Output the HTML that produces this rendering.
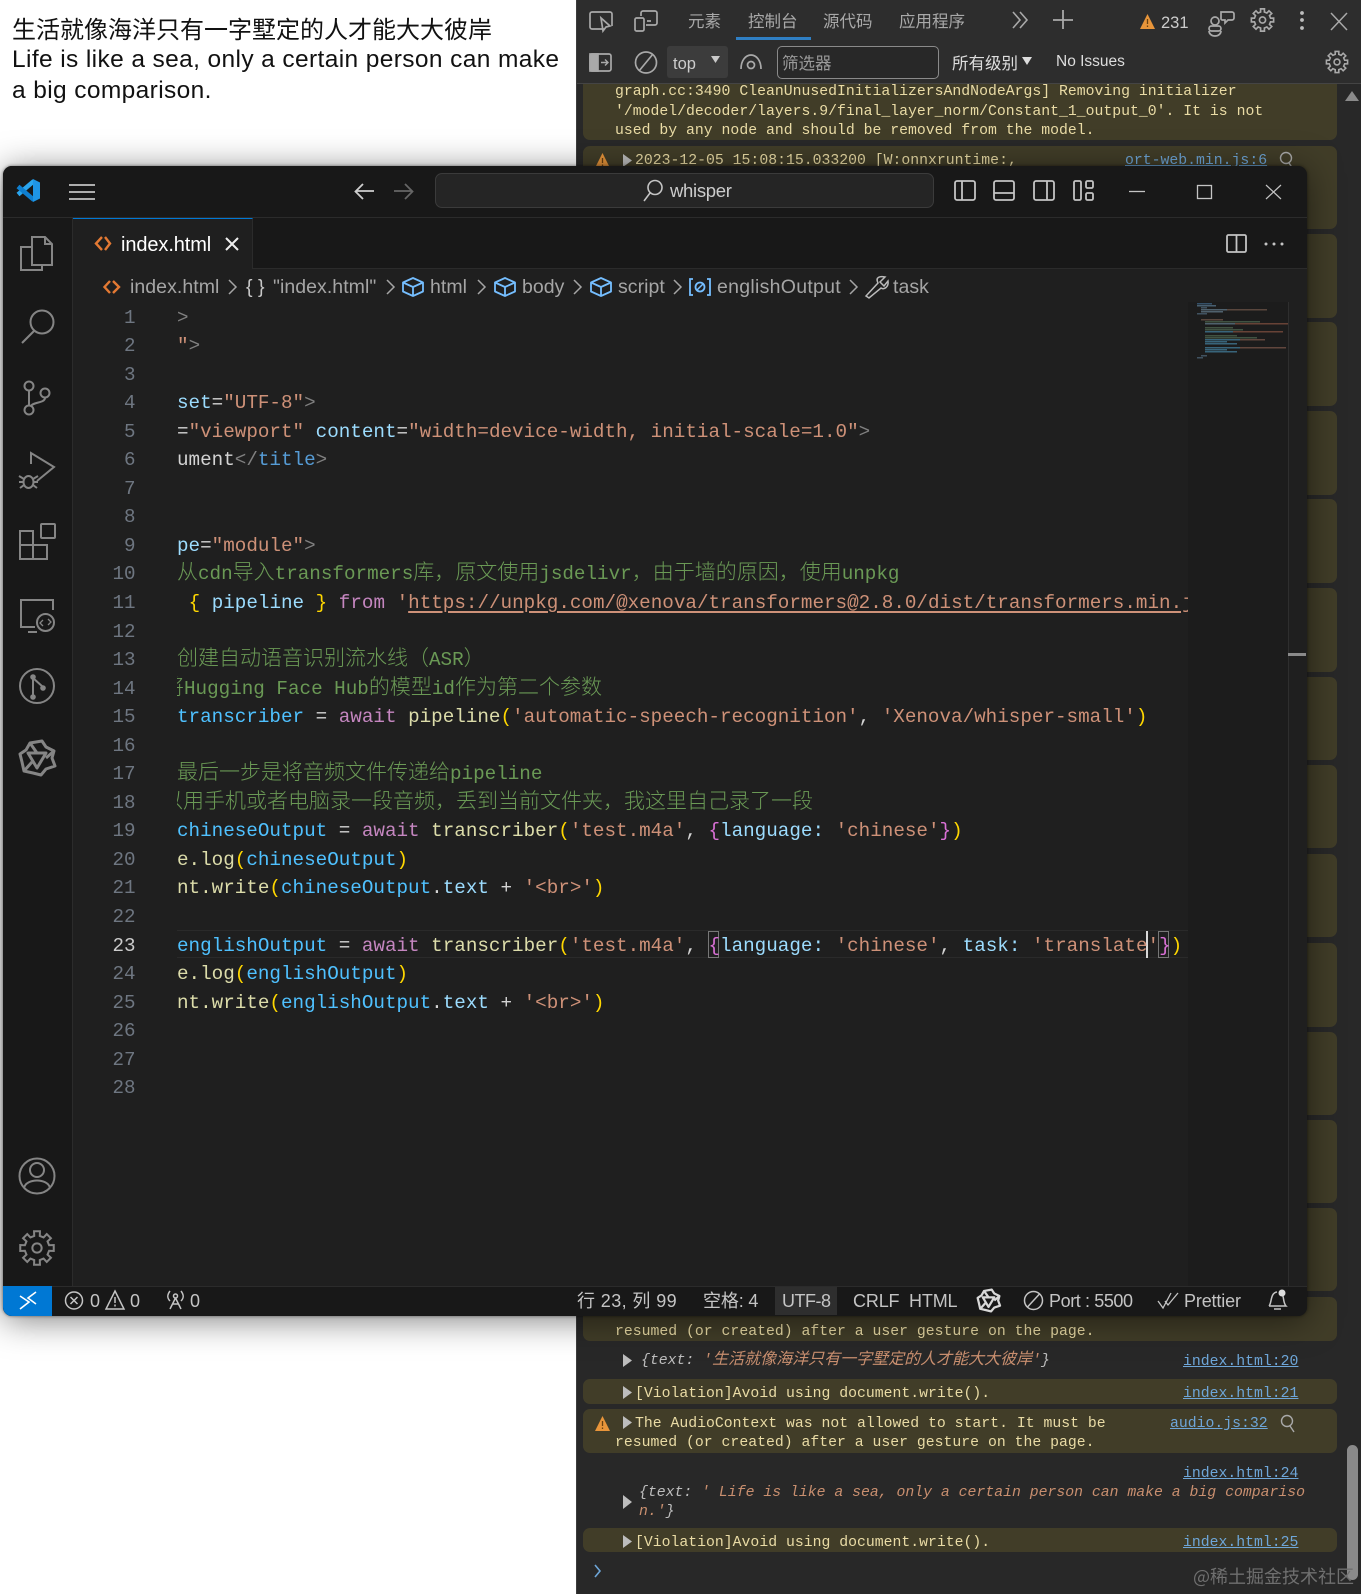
<!DOCTYPE html>
<html lang="zh"><head><meta charset="utf-8"><title>whisper</title>
<style>
html{overflow:hidden;width:1361px;height:1594px}
html,body{margin:0;padding:0;background:#fff}
body{position:relative;width:1361px;height:1594px;overflow:hidden;font-family:"Liberation Sans","Noto Sans CJK SC",sans-serif}
.a{position:absolute}
.t{position:absolute;white-space:pre}
svg.layer{position:absolute;left:0;top:0;width:1361px;height:1594px;pointer-events:none}
#dev{position:absolute;left:576px;top:0;width:785px;height:1594px;background:#282828;border-left:1px solid #3c3c3c;box-sizing:border-box}
.row{position:absolute;left:583px;width:754px;background:#413d28;border-radius:7px}
.m{position:absolute;white-space:pre;font:14.8px/19.6px "Liberation Mono","Noto Sans CJK SC",monospace;color:#e9dba5}
.m i{font-size:16px}
.lk{color:#6ea6d8;text-decoration:underline}
.dt{position:absolute;white-space:pre;font-size:16.5px;line-height:20px;color:#a8a8a8}
#win{position:absolute;left:3px;top:166px;width:1304px;height:1150px;background:#1f1f1f;border-radius:9px;box-shadow:0 4px 34px rgba(0,0,0,.5),0 0 3px rgba(0,0,0,.5)}
.ui{position:absolute;white-space:pre;color:#ccc;font-size:19px;line-height:26px;letter-spacing:-.3px}
.bc{color:#a5a5a5;font-size:19.5px;letter-spacing:.05px}
.st{font-size:18px;line-height:24px;top:1289px;color:#c4c4c4;letter-spacing:-.15px}
#nums{position:absolute;left:90px;top:303.5px;width:45.5px;text-align:right;color:#6e7681;font:19.2px/28.55px "Liberation Mono",monospace}
#nums div{height:28.55px}
#code{position:absolute;left:177px;top:303.5px;width:1011px;height:800px;overflow:hidden;font:19.26px/28.55px "Liberation Mono","Noto Sans CJK SC",monospace;color:#d4d4d4}
#code div{height:28.55px;white-space:pre;overflow:visible}
#code b{font-family:"Noto Sans CJK SC",sans-serif;font-weight:300;font-size:21px;line-height:0}
.at{color:#9cdcfe}.s{color:#ce9178}.c{color:#6a9955}.k{color:#c586c0}.f{color:#dcdcaa}.v{color:#4fc1ff}.g{color:#808080}.tg{color:#569cd6}.y{color:#ffd700}.p{color:#da70d6}.w{color:#9cdcfe}
</style></head><body>

<div class="t" style="left:12px;top:12px;font-size:24px;line-height:32px;color:#111;font-family:'Noto Sans CJK SC',sans-serif;font-weight:400">生活就像海洋只有一字墅定的人才能大大彼岸</div>
<div class="t" style="left:12px;top:44px;font-size:24.5px;letter-spacing:.38px;line-height:31px;color:#111;">Life is like a sea, only a certain person can make</div>
<div class="t" style="left:12px;top:75px;font-size:24.5px;letter-spacing:.38px;line-height:31px;color:#111;">a big comparison.</div>

<div id="dev"></div>
<div class="a" style="left:577px;top:0;width:784px;height:83px;background:#2d2d2d;border-bottom:1px solid #444"></div>
<div class="a" style="left:736px;top:37px;width:75px;height:3px;background:#2f7fc4"></div>
<div class="a" style="left:667px;top:46px;width:61px;height:32px;background:#3c3c3c;border-radius:3px"></div>
<div class="a" style="left:777px;top:46px;width:160px;height:31px;border:1px solid #8a8a8a;border-radius:5px;background:#282828"></div>

<div class="dt" style="left:688px;top:12px">元素</div>
<div class="dt" style="left:748px;top:12px">控制台</div>
<div class="dt" style="left:823px;top:12px">源代码</div>
<div class="dt" style="left:899px;top:12px">应用程序</div>
<div class="dt" style="left:1161px;top:13px;color:#ccc">231</div>
<div class="dt" style="left:673px;top:54px;color:#ccc">top</div>
<div class="dt" style="left:782px;top:54px;color:#999">筛选器</div>
<div class="dt" style="left:952px;top:54px;color:#ddd">所有级别</div>
<div class="dt" style="left:1056px;top:52px;color:#ddd;font-size:15.5px">No Issues</div>

<div class="row" style="top:84px;height:56px;border-radius:0 0 7px 7px"></div>
<div class="m" style="left:615px;top:83px">graph.cc:3490 CleanUnusedInitializersAndNodeArgs] Removing initializer
'/model/decoder/layers.9/final_layer_norm/Constant_1_output_0'. It is not
used by any node and should be removed from the model.</div>
<div class="row" style="top:146px;height:83px"></div>
<div class="m" style="left:635px;top:152px">2023-12-05 15:08:15.033200 [W:onnxruntime:,</div>
<div class="m lk" style="left:1125px;top:152px">ort-web.min.js:6</div>
<div class="row" style="top:234px;height:84px"></div>
<div class="row" style="top:322px;height:84px"></div>
<div class="row" style="top:411px;height:84px"></div>
<div class="row" style="top:499px;height:84px"></div>
<div class="row" style="top:588px;height:84px"></div>
<div class="row" style="top:677px;height:83px"></div>
<div class="row" style="top:765px;height:83px"></div>
<div class="row" style="top:854px;height:83px"></div>
<div class="row" style="top:943px;height:84px"></div>
<div class="row" style="top:1032px;height:83px"></div>
<div class="row" style="top:1120px;height:83px"></div>
<div class="row" style="top:1208px;height:83px"></div>

<div class="row" style="top:1297px;height:44px"></div>
<div class="m" style="left:615px;top:1323px">resumed (or created) after a user gesture on the page.</div>
<div class="m" style="left:641px;top:1351px;font-style:italic;color:#bdbdbd">{text: <span style="color:#c98f6f">'<i>生活就像海洋只有一字墅定的人才能大大彼岸</i>'</span>}</div>
<div class="m lk" style="left:1183px;top:1353px">index.html:20</div>
<div class="row" style="top:1379px;height:25px"></div>
<div class="m" style="left:635px;top:1385px">[Violation]Avoid using document.write().</div>
<div class="m lk" style="left:1183px;top:1385px">index.html:21</div>
<div class="row" style="top:1409px;height:44px"></div>
<div class="m" style="left:635px;top:1415px">The AudioContext was not allowed to start. It must be</div>
<div class="m" style="left:615px;top:1434px">resumed (or created) after a user gesture on the page.</div>
<div class="m lk" style="left:1170px;top:1415px">audio.js:32</div>
<div class="m lk" style="left:1183px;top:1465px">index.html:24</div>
<div class="m" style="left:639px;top:1484px;font-style:italic;color:#bdbdbd">{text: <span style="color:#c98f6f">' Life is like a sea, only a certain person can make a big compariso</span></div>
<div class="m" style="left:639px;top:1503px;font-style:italic;color:#c98f6f">n.'<span style="color:#bdbdbd">}</span></div>
<div class="row" style="top:1528px;height:24px"></div>
<div class="m" style="left:635px;top:1534px">[Violation]Avoid using document.write().</div>
<div class="m lk" style="left:1183px;top:1534px">index.html:25</div>
<div class="a" style="left:1347px;top:1445px;width:11px;height:135px;background:#8a8a8a;border-radius:6px"></div>
<div class="t" style="left:1193px;top:1564px;font-size:18px;line-height:24px;color:#6f6f6f;font-family:'Noto Sans CJK SC',sans-serif">@稀土掘金技术社区</div>

<svg class="layer" viewBox="0 0 1361 1594" fill="none" stroke="#a9a9a9" stroke-width="1.7">
<defs>
<path id="gearp" d="M-1.8-7.8L-1.9-10.8 1.9-10.8 1.8-7.8 4.24-6.79 6.29-8.98 8.98-6.29 6.79-4.24 7.8-1.8 10.8-1.9 10.8 1.9 7.8 1.8 6.79 4.24 8.98 6.29 6.29 8.98 4.24 6.79 1.8 7.8 1.9 10.8-1.9 10.8-1.8 7.8-4.24 6.79-6.29 8.98-8.98 6.29-6.79 4.24-7.8 1.8-10.8 1.9-10.8-1.9-7.8-1.8-6.79-4.24-8.98-6.29-6.29-8.98-4.24-6.79Z"/>
<g id="warn"><path d="M7.500 0L15 15H0Z" fill="#e8953a" stroke="none"/><path d="M7.500 5V10M7.500 11.500V13" stroke="#6a4110" stroke-width="1.300"/></g>
</defs>
<!-- inspect -->
<path d="M604 29H592a2 2 0 0 1-2-2V14a2 2 0 0 1 2-2h18a2 2 0 0 1 2 2v12"/><path d="M601 18L603 31 606 27 610 26Z"/>
<!-- device -->
<rect x="635" y="18" width="9" height="13" rx="1.5"/><path d="M641 16V13a2 2 0 0 1 2-2h12a2 2 0 0 1 2 2v10a2 2 0 0 1-2 2H646M647 21h4"/>
<!-- more / plus -->
<path d="M1013 12L1020 20 1013 28M1020 12L1027 20 1020 28" stroke-width="1.6"/>
<path d="M1063 10V29M1053 20H1073" stroke-width="1.8"/>
<use href="#warn" x="1140" y="14"/>
<!-- feedback -->
<rect x="1209" y="26" width="12" height="5" rx="2.5"/><circle cx="1215" cy="21" r="4"/><path d="M1209 31a6 5 0 0 0 12 0M1221 12h11a2 2 0 0 1 2 2v4a2 2 0 0 1-2 2h-4l-3 3v-3h-3a2 2 0 0 1-1-1V13z"/>
<g transform="translate(1262.5 20) scale(1.03)" stroke-width="1.6"><use href="#gearp"/><circle r="3"/></g>
<g fill="#bdbdbd" stroke="none"><circle cx="1302" cy="13" r="1.9"/><circle cx="1302" cy="20" r="1.9"/><circle cx="1302" cy="28" r="1.9"/></g>
<path d="M1331 13L1347 30M1347 13L1331 30" stroke-width="1.5"/>
<!-- dock -->
<rect x="590" y="54" width="21" height="17" rx="2"/><rect x="590" y="54" width="8" height="17" fill="#a9a9a9"/><path d="M601 62.5H608M605 59.5L608 62.5 605 65.5" stroke-width="1.4"/>
<ellipse cx="646" cy="62.5" rx="10.5" ry="10.5"/><path d="M639 71L653 54"/>
<path d="M711 56h9l-4.500 7z" fill="#c9c9c9" stroke="none"/>
<circle cx="751" cy="65" r="3.5"/><path d="M741 69C741 60 746 55 751 55S761 60 761 69"/>
<path d="M1022 57h10l-5 8z" fill="#ddd" stroke="none"/>
<g transform="translate(1337 62) scale(.98)" stroke-width="1.6"><use href="#gearp"/><circle r="3"/></g>
<!-- scrollbar up -->
<path d="M1345 101L1352 91 1359 101Z" fill="#8a8a8a" stroke="none"/>
<!-- warn + arrows -->
<use href="#warn" x="595" y="153"/>
<path d="M623 154V167L632 160.500Z" fill="#bdbdbd" stroke="none"/>
<circle cx="1286" cy="158" r="5.5" stroke-width="1.4"/><path d="M1289 163L1293 169" stroke-width="1.4"/>
<path d="M623 1354V1367L632 1360.500Z" fill="#bdbdbd" stroke="none"/>
<path d="M623 1386V1399L632 1392.500Z" fill="#bdbdbd" stroke="none"/>
<use href="#warn" x="595" y="1416"/>
<path d="M623 1416V1429L632 1422.500Z" fill="#bdbdbd" stroke="none"/>
<circle cx="1287" cy="1421" r="5.500" stroke-width="1.4"/><path d="M1290 1426L1294 1432" stroke-width="1.4"/>
<path d="M623 1495V1509L632 1502Z" fill="#bdbdbd" stroke="none"/>
<path d="M623 1535V1548L632 1541.500Z" fill="#bdbdbd" stroke="none"/>
<path d="M595 1565L600 1571 595 1577" stroke="#6ea6d8" stroke-width="1.6"/>
</svg>

<div id="win"></div>
<div class="a" style="left:3px;top:166px;width:1304px;height:51px;background:#181818;border-radius:9px 9px 0 0;border-bottom:1px solid #2b2b2b;box-sizing:content-box"></div>
<div class="a" style="left:435px;top:173px;width:497px;height:33px;background:#252525;border:1px solid #3b3b3b;border-radius:7px"></div>
<div class="a" style="left:3px;top:218px;width:69px;height:1068px;background:#181818;border-right:1px solid #2b2b2b"></div>
<div class="a" style="left:73px;top:218px;width:1234px;height:51px;background:#181818;border-bottom:1px solid #2b2b2b;box-sizing:border-box"></div>
<div class="a" style="left:73px;top:218px;width:180px;height:51px;background:#1f1f1f;border-top:1px solid #0078d4;border-right:1px solid #2b2b2b;box-sizing:border-box"></div>
<div class="a" style="left:1188px;top:302px;width:100px;height:984px;background:#1c1c1c"></div>
<div class="a" style="left:1288px;top:302px;width:18px;height:984px;background:#1f1f1f;border-left:1px solid #2e2e2e;box-sizing:border-box"></div>
<div class="a" style="left:1288px;top:653px;width:18px;height:3px;background:#8a8a8a"></div>
<div class="a" style="left:177px;top:930px;width:1011px;height:28px;border-top:1px solid #2a2a2a;border-bottom:1px solid #2a2a2a;box-sizing:border-box"></div>
<div class="a" style="left:708px;top:931px;width:11px;height:27px;border:1px solid #777;box-sizing:border-box"></div>
<div class="a" style="left:1158px;top:931px;width:11px;height:27px;border:1px solid #777;box-sizing:border-box"></div>
<div class="a" style="left:1146px;top:931px;width:2px;height:27px;background:#d8d8d8"></div>
<div class="a" style="left:3px;top:1286px;width:1304px;height:30px;background:#181818;border-top:1px solid #2b2b2b;border-radius:0 0 9px 9px;box-sizing:border-box"></div>
<div class="a" style="left:3px;top:1286px;width:49px;height:30px;background:#0078d4;border-radius:0 0 0 9px"></div>
<div class="a" style="left:775px;top:1287px;width:62px;height:28px;background:#2e2e2e"></div>

<div class="ui" style="left:670px;top:178px;color:#ccc;font-size:18.5px">whisper</div>
<div class="ui" style="left:121px;top:232px;color:#fff;font-size:20px;letter-spacing:-.1px">index.html</div>
<div class="ui bc" style="left:130px;top:274px">index.html</div>
<div class="ui bc" style="left:246px;top:274px;color:#c8c8c8">{ }</div>
<div class="ui bc" style="left:273px;top:274px">"index.html"</div>
<div class="ui bc" style="left:430px;top:274px">html</div>
<div class="ui bc" style="left:522px;top:274px">body</div>
<div class="ui bc" style="left:618px;top:274px">script</div>
<div class="ui bc" style="left:717px;top:274px;letter-spacing:.28px">englishOutput</div>
<div class="ui bc" style="left:893px;top:274px">task</div>

<div id="nums"><div>1</div><div>2</div><div>3</div><div>4</div><div>5</div><div>6</div><div>7</div><div>8</div><div>9</div><div>10</div><div>11</div><div>12</div><div>13</div><div>14</div><div>15</div><div>16</div><div>17</div><div>18</div><div>19</div><div>20</div><div>21</div><div>22</div><div style="color:#ccc">23</div><div>24</div><div>25</div><div>26</div><div>27</div><div>28</div></div>

<div id="code"><div><span class="g">&gt;</span></div><div><span class="s">"</span><span class="g">&gt;</span></div><div></div><div><span class="at">set</span>=<span class="s">"UTF-8"</span><span class="g">&gt;</span></div><div>=<span class="s">"viewport"</span> <span class="at">content</span>=<span class="s">"width=device-width, initial-scale=1.0"</span><span class="g">&gt;</span></div><div>ument<span class="g">&lt;/</span><span class="tg">title</span><span class="g">&gt;</span></div><div></div><div></div><div><span class="at">pe</span>=<span class="s">"module"</span><span class="g">&gt;</span></div><div class="c"><b>从</b>cdn<b>导入</b>transformers<b>库，原文使用</b>jsdelivr<b>，由于墙的原因，使用</b>unpkg</div><div> <span class="y">{</span> <span class="at">pipeline</span> <span class="y">}</span> <span class="k">from</span> <span class="s">'<span style="text-decoration:underline;text-decoration-thickness:2px;text-underline-offset:3px">https://unpkg.com/@xenova/transformers@2.8.0/dist/transformers.min.js</span>'</span></div><div></div><div class="c"><b>创建自动语音识别流水线（</b>ASR<b>）</b></div><div class="c"><b style="margin-left:-14px">将</b>Hugging Face Hub<b>的模型</b>id<b>作为第二个参数</b></div><div><span class="v">transcriber</span> = <span class="k">await</span> <span class="f">pipeline</span><span class="y">(</span><span class="s">'automatic-speech-recognition'</span>, <span class="s">'Xenova/whisper-small'</span><span class="y">)</span></div><div></div><div class="c"><b>最后一步是将音频文件传递给</b>pipeline</div><div class="c"><b style="margin-left:-15px">以用手机或者电脑录一段音频，丢到当前文件夹，我这里自己录了一段</b></div><div><span class="v">chineseOutput</span> = <span class="k">await</span> <span class="f">transcriber</span><span class="y">(</span><span class="s">'test.m4a'</span>, <span class="p">{</span><span class="at">language</span><span class="at">:</span> <span class="s">'chinese'</span><span class="p">}</span><span class="y">)</span></div><div><span class="f">e.log</span><span class="y">(</span><span class="v">chineseOutput</span><span class="y">)</span></div><div><span class="f">nt.write</span><span class="y">(</span><span class="v">chineseOutput</span>.<span class="at">text</span> + <span class="s">'&lt;br&gt;'</span><span class="y">)</span></div><div></div><div><span class="v">englishOutput</span> = <span class="k">await</span> <span class="f">transcriber</span><span class="y">(</span><span class="s">'test.m4a'</span>, <span class="p">{</span><span class="at">language</span><span class="at">:</span> <span class="s">'chinese'</span>, <span class="at">task</span><span class="at">:</span> <span class="s">'translate'</span><span class="p">}</span><span class="y">)</span></div><div><span class="f">e.log</span><span class="y">(</span><span class="v">englishOutput</span><span class="y">)</span></div><div><span class="f">nt.write</span><span class="y">(</span><span class="v">englishOutput</span>.<span class="at">text</span> + <span class="s">'&lt;br&gt;'</span><span class="y">)</span></div></div>

<div class="ui st" style="left:577px;letter-spacing:.4px">行 23, 列 99</div>
<div class="ui st" style="left:703px">空格: 4</div>
<div class="ui st" style="left:782px;letter-spacing:-.5px">UTF-8</div>
<div class="ui st" style="left:853px">CRLF</div>
<div class="ui st" style="left:909px">HTML</div>
<div class="ui st" style="left:1049px;letter-spacing:-.4px">Port : 5500</div>
<div class="ui st" style="left:1184px">Prettier</div>
<div class="ui st" style="left:90px">0</div>
<div class="ui st" style="left:130px">0</div>
<div class="ui st" style="left:190px">0</div>

<svg class="layer" viewBox="0 0 1361 1594" fill="none" stroke="#858585" stroke-width="2">
<defs>
<g id="star" stroke-linejoin="round"><path d="M11 3L23 1 27 7 35 11 33 18 36 26 27 29 22 35 14 33 5 31 3 22 1 14 7 10Z"/><path d="M9 13H27L18 28Z"/><path d="M11 3L18 13M35 11L27 18M5 31L13 22"/></g>
<path id="cube" d="M11 1L21 5.500V14.500L11 19 1 14.500V5.500ZM1 5.500L11 10 21 5.500M11 10V19" fill="none" stroke="#75beff" stroke-width="1.800" stroke-linejoin="round"/>
</defs>
<!-- logo -->
<path d="M34 181L18 194.500" stroke="#2aa5ee" stroke-width="4.500"/><path d="M34 200L18 186.500" stroke="#0f7fd0" stroke-width="4.500"/>
<path d="M33 179L40 182.500V198.500L33 202Z" fill="#1e95e6" stroke="none"/>
<path d="M69 185H95M69 192H95M69 199H95" stroke="#c4c4c4" stroke-width="1.800"/>
<path d="M356 191H374M363 184L355.500 191.500 363 199" stroke="#cfcfcf" stroke-width="1.800"/>
<path d="M394 191H412M405 184L412.500 191.500 405 199" stroke="#666" stroke-width="1.800"/>
<circle cx="655" cy="187.500" r="7" stroke="#c4c4c4" stroke-width="1.600"/><path d="M650 193L644 201" stroke="#c4c4c4" stroke-width="1.600"/>
<!-- layout -->
<g stroke="#c4c4c4" stroke-width="1.800">
<rect x="955" y="181" width="20" height="19" rx="2"/><path d="M962 181V200"/>
<rect x="994" y="181" width="20" height="19" rx="2"/><path d="M994 193H1014"/>
<rect x="1034" y="181" width="20" height="19" rx="2"/><path d="M1047 181V200"/>
<rect x="1074" y="181" width="7" height="19" rx="1.500"/><rect x="1086" y="181" width="7" height="7" rx="1.500"/><rect x="1086" y="193" width="7" height="7" rx="1.500"/>
<path d="M1129 191.500H1145" stroke-width="1.300"/>
<rect x="1197.500" y="185.500" width="14" height="13" stroke-width="1.300"/>
<path d="M1266 185L1281 199M1281 185L1266 199" stroke-width="1.200"/>
<rect x="1227" y="235" width="19" height="17" rx="1.500"/><path d="M1236.500 235V252"/>
</g>
<g fill="#c4c4c4" stroke="none"><circle cx="1266" cy="244" r="1.500"/><circle cx="1274" cy="244" r="1.500"/><circle cx="1282" cy="244" r="1.500"/></g>
<!-- tab -->
<path d="M102 237L96 243.500 102 250M105 237L110 243.500 105 250" stroke="#e37933" stroke-width="2.400"/>
<path d="M226 238L238 250M238 238L226 250" stroke="#eee" stroke-width="2"/>
<!-- breadcrumb -->
<path d="M110 281L104.500 287 110 293M113 281L119 287 113 293" stroke="#e37933" stroke-width="2.400"/>
<g stroke="#a5a5a5" stroke-width="1.500">
<path d="M229 280L236 287 229 294M387 280L394 287 387 294M478 280L485 287 478 294M574 280L581 287 574 294M674 280L681 287 674 294M850 280L857 287 850 294"/>
</g>
<use href="#cube" x="402" y="277"/><use href="#cube" x="494" y="277"/><use href="#cube" x="590" y="277"/>
<path d="M693 279H690V295H693M707 279H710V295H707" stroke="#75beff" stroke-width="1.800"/>
<circle cx="700" cy="287" r="4.500" stroke="#75beff" stroke-width="1.800"/><path d="M697 290L703 284" stroke="#75beff" stroke-width="1.500"/>
<path d="M866 296L878 283C875 277 880 276 885 277L880 282 884 286 888 281C889 287 884 290 881 288L869 298Z" stroke="#bbb" stroke-width="1.500"/>
<!-- activity -->
<path d="M32 247H21V270H42V265M32 237H45L52 244V265H32ZM45 237V244H52"/>
<circle cx="42" cy="322" r="11.500"/><path d="M34 331L22 343"/>
<circle cx="29" cy="386" r="4.500"/><circle cx="45" cy="393" r="4.500"/><circle cx="29" cy="410" r="4.500"/><path d="M29 391V405M45 398C45 403 33 402 31 406"/>
<path d="M31 464V453L54 467 37 481"/><ellipse cx="28.500" cy="482" rx="5" ry="6"/><path d="M19 476L24 479M38 476L33 479M19 482H23M38 482H34M20 488L24 485M37 488L33 485"/>
<path d="M20 531H33V559H20ZM20 545H47V559H33"/><rect x="41" y="524" width="14" height="14" rx="1"/>
<path d="M53 610V600H21V627H35M28 632H37"/><circle cx="45.500" cy="622.500" r="8.500"/><path d="M43 620L40 623 43 626M48 619L51 622 48 625" stroke-width="1.300"/>
<circle cx="37" cy="686" r="17"/><path d="M33 677V696M33 678L43 687"/><g fill="#858585" stroke="none"><circle cx="33" cy="677" r="2.800"/><circle cx="33" cy="697" r="2.800"/><circle cx="43" cy="688" r="2.800"/></g>
<use href="#star" x="19" y="740" stroke-width="3"/>
<circle cx="37" cy="1176" r="17.500"/><circle cx="37" cy="1170" r="7"/><path d="M24 1188C26 1178 48 1178 50 1188"/>
<g transform="translate(37 1248) scale(1.550)" stroke-width="1.300"><use href="#gearp"/><circle r="3"/></g>
<!-- minimap -->
<g stroke="none" opacity=".55">
<rect x="1197" y="303" width="15" height="1.500" fill="#4b7ea8"/><rect x="1197" y="305" width="19" height="1.500" fill="#6d96b8"/>
<rect x="1201" y="307" width="6" height="1.500" fill="#5f7f99"/><rect x="1201" y="309" width="26" height="1.500" fill="#7a9bb0"/><rect x="1227" y="309" width="40" height="1.500" fill="#8b6a58"/>
<rect x="1201" y="311" width="22" height="1.500" fill="#7a9bb0"/><rect x="1197" y="313" width="10" height="1.500" fill="#5f7f99"/>
<rect x="1201" y="319" width="22" height="1.500" fill="#8b6a58"/><rect x="1205" y="321" width="55" height="1.500" fill="#5f7f60"/>
<rect x="1205" y="323" width="30" height="1.500" fill="#7a9bb0"/><rect x="1235" y="323" width="53" height="1.500" fill="#a5624c"/>
<rect x="1205" y="327" width="28" height="1.500" fill="#5f7f60"/><rect x="1205" y="329" width="38" height="1.500" fill="#5f7f60"/>
<rect x="1205" y="331" width="28" height="1.500" fill="#4fa0c8"/><rect x="1233" y="331" width="50" height="1.500" fill="#a5624c"/>
<rect x="1205" y="335" width="32" height="1.500" fill="#5f7f60"/><rect x="1205" y="337" width="52" height="1.500" fill="#5f7f60"/>
<rect x="1205" y="339" width="35" height="1.500" fill="#4fa0c8"/><rect x="1240" y="339" width="25" height="1.500" fill="#9a6a58"/>
<rect x="1205" y="341" width="22" height="1.500" fill="#4fa0c8"/><rect x="1205" y="343" width="32" height="1.500" fill="#4fa0c8"/>
<rect x="1205" y="347" width="35" height="1.500" fill="#4fa0c8"/><rect x="1240" y="347" width="46" height="1.500" fill="#9a6a58"/>
<rect x="1205" y="349" width="22" height="1.500" fill="#4fa0c8"/><rect x="1205" y="351" width="32" height="1.500" fill="#4fa0c8"/>
<rect x="1201" y="355" width="6" height="1.500" fill="#5f7f99"/><rect x="1197" y="357" width="6" height="1.500" fill="#5f7f99"/>
</g>
<!-- status -->
<path d="M20 1308L29 1301 20 1295M36 1291L28 1297 36 1303" transform="translate(0 1)" stroke="#fff" stroke-width="1.600"/>
<g stroke="#c4c4c4" stroke-width="1.500">
<circle cx="74" cy="1300.500" r="8.500"/><path d="M70.500 1297L77.500 1304M77.500 1297L70.500 1304"/>
<path d="M115 1291L124 1309H106ZM115 1297V1303M115 1304.500V1306.500"/>
<circle cx="175.500" cy="1296" r="2"/><path d="M175.500 1298L170 1309M175.500 1298L181 1309M172 1304H179M170 1291C167 1295 167 1298 170 1301M181 1291C184 1295 184 1298 181 1301"/>
<circle cx="1033.500" cy="1300.500" r="9"/><path d="M1027.500 1307L1039.500 1294"/>
<path d="M1158 1301L1163 1308 1171 1293M1165 1301L1168 1305 1178 1293" stroke-width="1.300"/>
<path d="M1269 1306C1272 1303 1270 1293 1277 1292M1269 1306H1286C1283 1303 1284 1296 1282 1294M1274 1309H1281"/>
</g>
<circle cx="1282" cy="1293" r="3.500" fill="#ddd" stroke="none"/>
<use href="#star" transform="translate(977 1289) scale(.64)" stroke="#d8d8d8" stroke-width="3.500"/>
</svg>
</body></html>
